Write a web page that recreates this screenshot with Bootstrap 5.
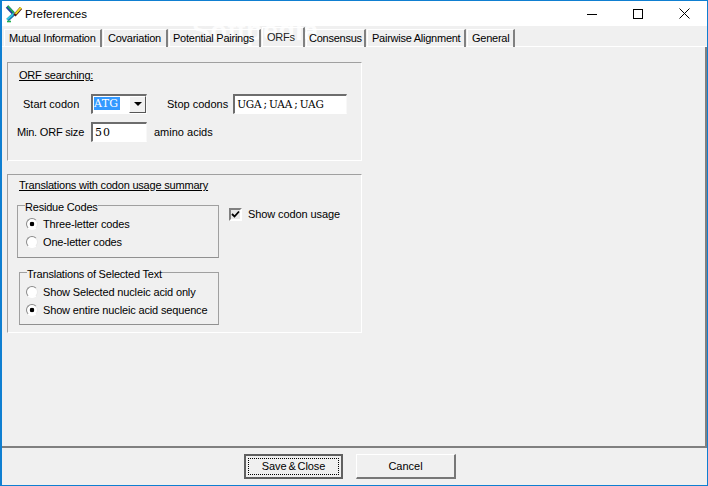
<!DOCTYPE html>
<html lang="en">
<head>
<meta charset="utf-8">
<title>Preferences</title>
<link href="https://cdn.jsdelivr.net/npm/bootstrap@5.3.0/dist/css/bootstrap.min.css" rel="stylesheet">
<style>
html,body{height:100%;margin:0;overflow:hidden}
body{background:#f0f0f0;font-family:"Liberation Sans",Arial,sans-serif;font-size:11px;line-height:13px;color:#000}
.win{width:708px;height:486px;position:relative;border:1px solid #0f7fd1;border-left-width:2px}
.titlebar{height:25px;background:#fff;padding-left:3px}
.titlebar .ttl{font-size:11.5px;margin-left:2px;padding-top:1px}
.wbtn{width:46px;height:24px}
.tabsrow{height:21px;padding:2px 0 0 2px;border-bottom:1px solid #fff;letter-spacing:-.25px;position:relative;z-index:1}
.tabitem{height:18px;margin-top:1px;padding:2px 0 0 4px;white-space:nowrap;border-left:1px solid #fff;border-top:1px solid #fff;border-right:2px solid #808080;margin-right:1px;color:#000}
.tabitem.on{margin-top:-1px;height:20px;padding-top:3px;color:#222;border-top-color:#fff}
.tw-a{width:98px}.tw-b{width:65px}.tw-c{width:92px;padding-left:3px}.tw-d{width:43px}.tw-e{width:60px;padding-left:2px}.tw-f{width:99px}.tw-g{width:48px}
.wmark{position:absolute;left:190px;top:14px;font-size:27px;line-height:32px;font-weight:700;color:#fff;opacity:.8;letter-spacing:.4px;pointer-events:none}
.pane{height:401px;border-right:2px solid #808080;border-bottom:2px solid #808080;padding:15px 0 0 5px;position:relative;z-index:1}
.grp{width:355px;border:1px solid #a0a0a0;border-right-color:#fff;border-bottom-color:#fff}
.grp-a{height:99px;padding:6px 0 0 11px;margin-bottom:13px}
.grp-b{height:159px;padding:4px 0 0 11px}
.hd{text-decoration:underline;display:block;height:13px;letter-spacing:-.2px}
.frow{height:21px;display:flex;align-items:center}
.frow-1{margin-top:11px}
.frow-2{margin-top:7px}
.lbl1{width:72px;padding:2px 0 0 4px}
.lbl0{width:74px;margin-left:-2px;letter-spacing:-.2px;padding-top:2px}
.lbl2{margin-left:20px;margin-right:5px;padding-top:2px}
.lbl3{margin-left:7px;padding-top:2px}
.sunk{background:#fff;border:1px solid #fff;border-top:2px solid #6d6d6d;border-left:2px solid #6d6d6d;border-right-color:#f8f8f8;outline:0;font-family:"DejaVu Serif",serif;font-size:10.5px;letter-spacing:-.2px;word-spacing:-1px;color:#000;height:20px;line-height:14px;padding:0 2px;border-radius:0}
.stopf{width:114px}
.sizef{width:56px;font-size:11px;letter-spacing:1px}
.combo{width:56px;display:flex;padding:0;position:relative}
.sel{background:#3399ff;color:#fff;height:13px;width:26px;margin:1px 0 0 1px;font-size:11px;letter-spacing:.3px;overflow:hidden;line-height:13px}
.cbtn{position:absolute;right:0;top:0;width:17px;height:17px;background:#f0f0f0;border:1px solid;border-color:#fff #555 #555 #fff;display:flex;align-items:center;justify-content:center}
.arrow{width:0;height:0;border:4px solid transparent;border-top:4px solid #000;border-bottom:0}
.gbox{border:1px solid #a0a0a0;border-bottom-color:#909090;height:61px;margin:0;min-width:0}
.gbox legend{float:none;width:auto;font-size:11px;line-height:13px;margin:0 0 1px -1px;padding:4px 0 0;color:#000;letter-spacing:-.2px}
.gbox-1{margin-left:-2px;width:202px;padding:0 0 0 8px}
.gbox-2{width:200px;margin-top:6px;padding:0 0 0 6px}
.gbox-2 legend{margin:0 0 2px 1px}
.opt{height:18px;display:flex;align-items:center;gap:5px;margin:0;letter-spacing:-.15px}
.rd{appearance:none;width:12px;height:12px;border-radius:50%;margin:0;flex:none;border:1px solid;border-color:#8a8a8a #e8e8e8 #fff #8a8a8a;background:#fff}
.rd:checked{background:radial-gradient(circle at 50% 50%,#000 0 2px,#fff 2.6px)}
.chk{width:13px;height:13px;border:2px solid;border-color:#808080 #fff #fff #808080;background:#e8e8e8;flex:none;display:flex}
.gboxes{margin-top:5px}
.chkrow{gap:6px;margin-top:11px;margin-left:10px;letter-spacing:-.1px}
.botbar{height:37px;gap:13px;padding:6px 9px 0 0}
.wbt{width:100px;height:25px;border-radius:0;padding:0;background:#f0f0f0;color:#000;font-size:11px;line-height:15px;border:1px solid;border-color:#fff #777 #777 #fff;border-width:1px 2px 2px 1px}
.wbt.dflt{width:99px;border:2px solid #606060;position:relative;background:#f0f0f0;word-spacing:-1px;letter-spacing:-.1px}
.wbt.dflt span{display:block;margin:2px;height:17px;border:1px dotted #000}
.wbt:hover{background:#f0f0f0;color:#000;border-color:#fff #777 #777 #fff}
</style>
</head>
<body>
<div class="win d-flex flex-column">
  <div class="titlebar d-flex align-items-center">
    <svg width="18" height="18" viewBox="0 0 18 18">
      <path d="M2 1.5 L8.5 8.5" stroke="#1f3fa0" stroke-width="3.4" fill="none"/>
      <path d="M2.6 1 L9 8" stroke="#20b050" stroke-width="1.8" fill="none"/>
      <path d="M9 9 L2.5 15" stroke="#1f6fb0" stroke-width="3.4" fill="none"/>
      <path d="M8.6 8.6 L2 14.6" stroke="#30d0e0" stroke-width="1.6" fill="none"/>
      <path d="M2 16.5 L6 16.5" stroke="#20b050" stroke-width="1.6" fill="none"/>
      <path d="M9.5 10.5 L16 3" stroke="#501818" stroke-width="3" fill="none"/>
      <path d="M10.5 8.8 L16 2.6" stroke="#ecdc20" stroke-width="2" fill="none"/>
    </svg>
    <div class="ttl flex-grow-1">Preferences</div>
    <div class="d-flex">
      <div class="wbtn d-flex align-items-center justify-content-center"><svg width="10" height="10"><path d="M0 5.5H10" stroke="#000"/></svg></div>
      <div class="wbtn d-flex align-items-center justify-content-center"><svg width="10" height="10"><rect x=".5" y=".5" width="9" height="9" fill="none" stroke="#000"/></svg></div>
      <div class="wbtn d-flex align-items-center justify-content-center"><svg width="11" height="11"><path d="M.5 .5L10.5 10.5M10.5 .5L.5 10.5" stroke="#000"/></svg></div>
    </div>
  </div>
  <ul class="nav tabsrow flex-nowrap">
    <li class="tabitem tw-a">Mutual Information</li>
    <li class="tabitem tw-b">Covariation</li>
    <li class="tabitem tw-c">Potential Pairings</li>
    <li class="tabitem on tw-d">ORFs</li>
    <li class="tabitem tw-e">Consensus</li>
    <li class="tabitem tw-f">Pairwise Alignment</li>
    <li class="tabitem tw-g">General</li>
  </ul>
  <div class="wmark">Softpedia</div>
  <div class="pane">
    <section class="grp grp-a">
      <span class="hd">ORF searching:</span>
      <div class="frow frow-1">
        <span class="lbl1">Start codon</span>
        <div class="sunk combo"><span class="sel">ATG</span><span class="cbtn"><span class="arrow"></span></span></div>
        <span class="lbl2">Stop codons</span>
        <input class="sunk stopf" value="UGA ; UAA ; UAG">
      </div>
      <div class="frow frow-2">
        <span class="lbl0">Min. ORF size</span>
        <input class="sunk sizef" value="50">
        <span class="lbl3">amino acids</span>
      </div>
    </section>
    <section class="grp grp-b">
      <span class="hd">Translations with codon usage summary</span>
      <div class="d-flex gboxes">
        <div>
          <fieldset class="gbox gbox-1">
            <legend>Residue Codes</legend>
            <label class="opt"><input class="rd" type="radio" name="a" checked>Three-letter codes</label>
            <label class="opt"><input class="rd" type="radio" name="a">One-letter codes</label>
          </fieldset>
          <fieldset class="gbox gbox-2">
            <legend>Translations of Selected Text</legend>
            <label class="opt"><input class="rd" type="radio" name="b">Show Selected nucleic acid only</label>
            <label class="opt"><input class="rd" type="radio" name="b" checked>Show entire nucleic acid sequence</label>
          </fieldset>
        </div>
        <label class="d-flex align-items-center align-self-start chkrow">
          <span class="chk"><svg width="9" height="9" viewBox="0 0 9 9"><path d="M1 4L3.5 6.5L8 1.5" fill="none" stroke="#000" stroke-width="1.8"/></svg></span>
          Show codon usage
        </label>
      </div>
    </section>
  </div>
  <div class="botbar d-flex justify-content-center">
    <button class="btn wbt dflt" type="button"><span>Save &amp; Close</span></button>
    <button class="btn wbt" type="button">Cancel</button>
  </div>
</div>
</body>
</html>
